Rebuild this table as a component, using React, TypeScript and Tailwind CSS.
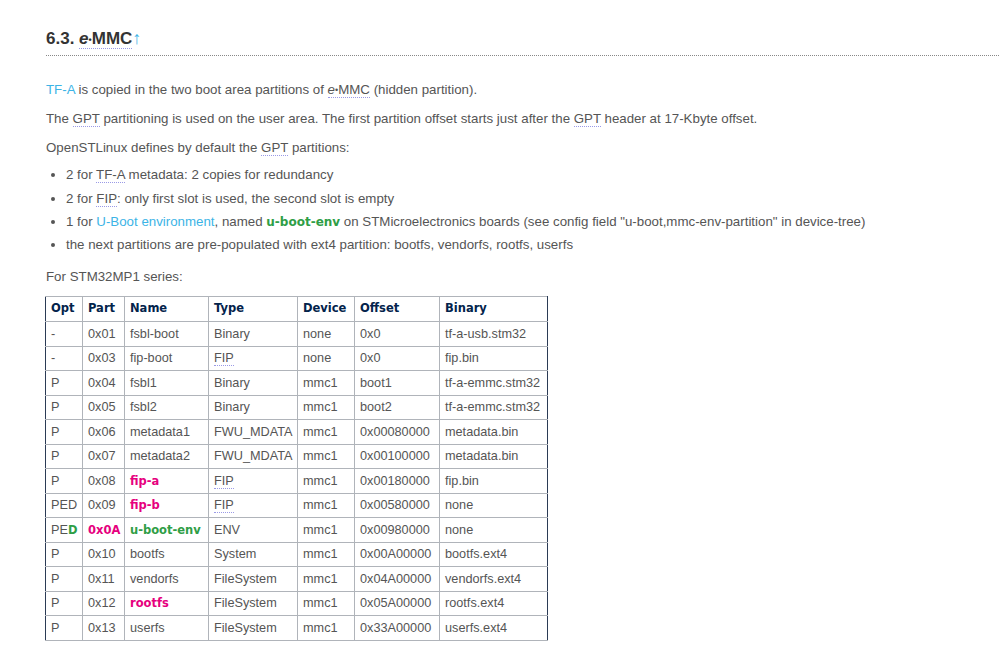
const rows: [React.ReactNode, React.ReactNode, React.ReactNode, React.ReactNode, string, string, string][] = [];

const pink = "font-['DejaVu_Sans',sans-serif] font-bold text-[11.5px] text-[#e6007e]";
const green = "font-['DejaVu_Sans',sans-serif] font-bold text-[11.5px] text-[#2f9e46]";

function Abbr({ children }: { children: React.ReactNode }) {
  return <span className="border-b border-dotted border-[#9a9ae6]">{children}</span>;
}

function Emmc() {
  return (
    <Abbr>
      <i>e</i>
      <span className="text-[9px] align-[1px]">•</span>MMC
    </Abbr>
  );
}

rows.push(
  ["-", "0x01", "fsbl-boot", "Binary", "none", "0x0", "tf-a-usb.stm32"],
  ["-", "0x03", "fip-boot", <Abbr>FIP</Abbr>, "none", "0x0", "fip.bin"],
  ["P", "0x04", "fsbl1", "Binary", "mmc1", "boot1", "tf-a-emmc.stm32"],
  ["P", "0x05", "fsbl2", "Binary", "mmc1", "boot2", "tf-a-emmc.stm32"],
  ["P", "0x06", "metadata1", "FWU_MDATA", "mmc1", "0x00080000", "metadata.bin"],
  ["P", "0x07", "metadata2", "FWU_MDATA", "mmc1", "0x00100000", "metadata.bin"],
  ["P", "0x08", <span className={pink}>fip-a</span>, <Abbr>FIP</Abbr>, "mmc1", "0x00180000", "fip.bin"],
  ["PED", "0x09", <span className={pink}>fip-b</span>, <Abbr>FIP</Abbr>, "mmc1", "0x00580000", "none"],
  [
    <>
      PE<span className={green}>D</span>
    </>,
    <span className={pink}>0x0A</span>,
    <span className={green}>u-boot-env</span>,
    "ENV",
    "mmc1",
    "0x00980000",
    "none",
  ],
  ["P", "0x10", "bootfs", "System", "mmc1", "0x00A00000", "bootfs.ext4"],
  ["P", "0x11", "vendorfs", "FileSystem", "mmc1", "0x04A00000", "vendorfs.ext4"],
  ["P", "0x12", <span className={pink}>rootfs</span>, "FileSystem", "mmc1", "0x05A00000", "rootfs.ext4"],
  ["P", "0x13", "userfs", "FileSystem", "mmc1", "0x33A00000", "userfs.ext4"]
);

const heads = ["Opt", "Part", "Name", "Type", "Device", "Offset", "Binary"];
const widths = ["w-[37px]", "w-[42px]", "w-[84px]", "w-[89px]", "w-[57px]", "w-[85px]", "w-[108px]"];

export default function App() {
  return (
    <div className="min-h-[652px] bg-white pl-[46px] pt-[29px] font-['Liberation_Sans',Arial,sans-serif] text-[13.3px] text-[#555]">
      <h2 className="border-b border-dotted border-[#888] pb-[5px] text-[17px] font-bold leading-[20px] text-[#333]">
        6.3. <Emmc />
        <span className="font-normal text-[18px] leading-[18px] text-[#3cb4e6]">↑</span>
      </h2>

      <p className="mt-[24px] leading-[20px]">
        <span className="text-[#3cb4e6]">TF-A</span> is copied in the two boot area partitions of <Emmc /> (hidden partition).
      </p>
      <p className="mt-[9px] leading-[20px]">
        The <Abbr>GPT</Abbr> partitioning is used on the user area. The first partition offset starts just after the{" "}
        <Abbr>GPT</Abbr> header at 17-Kbyte offset.
      </p>
      <p className="mt-[9px] leading-[20px]">
        OpenSTLinux defines by default the <Abbr>GPT</Abbr> partitions:
      </p>
      <ul className="mt-[7px] list-disc pl-[20px] leading-[20px] marker:text-[#555]">
        <li>
          2 for <Abbr>TF-A</Abbr> metadata: 2 copies for redundancy
        </li>
        <li className="mt-[4px]">
          2 for <Abbr>FIP</Abbr>: only first slot is used, the second slot is empty
        </li>
        <li className="mt-[3px]">
          1 for <span className="text-[#3cb4e6]">U-Boot environment</span>, named{" "}
          <span className="font-['DejaVu_Sans',sans-serif] text-[12px] font-bold text-[#2f9e46]">u-boot-env</span> on
          STMicroelectronics boards (see config field "u-boot,mmc-env-partition" in device-tree)
        </li>
        <li className="mt-[3px]">the next partitions are pre-populated with ext4 partition: bootfs, vendorfs, rootfs, userfs</li>
      </ul>
      <p className="mt-[12px] leading-[20px]">For STM32MP1 series:</p>

      <table className="ml-[-1px] mt-[9px] w-[502px] table-fixed border-collapse border-x border-x-[#2b3b55] border-y border-y-[#b0b4ba] text-[12.7px]">
        <thead>
          <tr>
            {heads.map((h, i) => (
              <th
                key={h}
                className={`${widths[i]} h-[25px] border border-[#b0b4ba] px-[5px] text-left align-middle font-['DejaVu_Sans',sans-serif] text-[11.5px] font-bold text-[#03234b] first:border-l-[#2b3b55] last:border-r-[#2b3b55]`}
              >
                {h}
              </th>
            ))}
          </tr>
        </thead>
        <tbody>
          {rows.map((r, ri) => (
            <tr key={ri}>
              {r.map((c, ci) => (
                <td
                  key={ci}
                  className="h-[24.5px] border border-[#b0b4ba] px-[5px] align-middle leading-[16px] whitespace-nowrap overflow-hidden first:border-l-[#2b3b55] last:border-r-[#2b3b55]"
                >
                  {c}
                </td>
              ))}
            </tr>
          ))}
        </tbody>
      </table>
    </div>
  );
}
